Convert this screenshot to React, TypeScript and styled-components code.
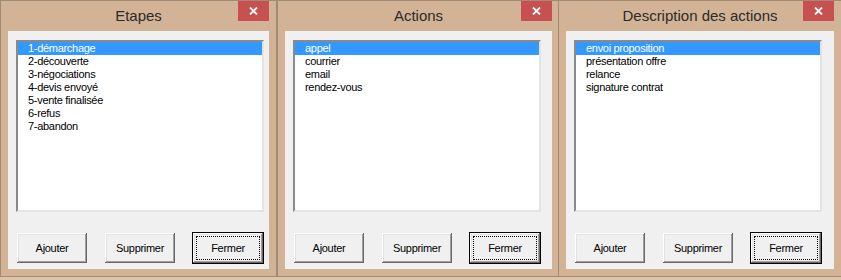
import React from 'react';
import styled, { createGlobalStyle } from 'styled-components';

const GlobalStyle = createGlobalStyle`
  html, body {
    margin: 0;
    padding: 0;
    background: #dcc6aa;
  }
  body {
    font-family: "Liberation Sans", Arial, sans-serif;
  }
`;

const Desktop = styled.div`
  display: flex;
  align-items: flex-start;
  width: 841px;
  height: 280px;
  overflow: hidden;
`;

const Window = styled.div<{ $clientWidth: number; $overlap?: number }>`
  box-sizing: border-box;
  display: flex;
  flex-direction: column;
  flex: none;
  width: ${(p) => p.$clientWidth + 16}px;
  height: 277px;
  margin-left: ${(p) => -(p.$overlap || 0)}px;
  padding: 0 7px 7px;
  background: #d3b395;
  border: 1px solid #a08b74;
`;

const TitleBar = styled.div`
  display: grid;
  grid-template-columns: 1fr auto 1fr;
  height: 30px;
  margin: 0 -7px;
  padding: 0 7px;
`;

const Title = styled.div`
  grid-column: 2;
  align-self: center;
  font-size: 15px;
  color: #2b2b2b;
  margin-top: -1px;
`;

const CloseButton = styled.div`
  grid-column: 3;
  justify-self: end;
  align-self: start;
  width: 31px;
  height: 20px;
  background: #c75050;
  display: flex;
  align-items: center;
  justify-content: center;
`;

const Client = styled.div`
  flex: 1;
  background: #f0f0f0;
  padding: 9px 0 0 8px;
  display: flex;
  flex-direction: column;
  gap: 20px;
`;

const ListBox = styled.div`
  box-sizing: border-box;
  width: 248px;
  height: 172px;
  background: #fff;
  border-top: 2px solid #8a8a8a;
  border-left: 2px solid #8a8a8a;
  border-right: 2px solid #e3e3e3;
  border-bottom: 2px solid #e3e3e3;
`;

const Item = styled.div<{ $selected?: boolean }>`
  height: 13px;
  line-height: 13px;
  font-size: 11px;
  letter-spacing: -0.3px;
  padding-left: 10px;
  color: ${(p) => (p.$selected ? '#fff' : '#000')};
  background: ${(p) => (p.$selected ? '#3399ff' : 'transparent')};
  white-space: nowrap;
`;

const ButtonRow = styled.div`
  display: flex;
  gap: 16px;
`;

const Button = styled.div<{ $default?: boolean }>`
  box-sizing: border-box;
  position: relative;
  width: 72px;
  height: 32px;
  display: flex;
  align-items: center;
  justify-content: center;
  font-size: 11px;
  letter-spacing: -0.3px;
  color: #000;
  background: #f0f0f0;
  border: 1px solid ${(p) => (p.$default ? '#000' : '#f0f0f0')};
  box-shadow: inset -1px -1px 0 #696969, inset 1px 1px 0 #fff, inset -2px -2px 0 #a0a0a0, inset 2px 2px 0 #e3e3e3;

  ${(p) =>
    p.$default &&
    `
    &::after {
      content: '';
      position: absolute;
      inset: 3px;
      border: 1px dotted #000;
    }
  `}
`;

const CloseIcon = () => (
  <svg width="9" height="8" viewBox="0 0 9 8">
    <path d="M1 0.5 L8 7.5 M8 0.5 L1 7.5" stroke="#fff" strokeWidth="1.8" />
  </svg>
);

type Pane = {
  title: string;
  items: string[];
  clientWidth: number;
  overlap?: number;
};

const panes: Pane[] = [
  {
    title: 'Etapes',
    items: ['1-démarchage', '2-découverte', '3-négociations', '4-devis envoyé', '5-vente finalisée', '6-refus', '7-abandon'],
    clientWidth: 261
  },
  {
    title: 'Actions',
    items: ['appel', 'courrier', 'email', 'rendez-vous'],
    clientWidth: 267
  },
  {
    title: 'Description des actions',
    items: ['envoi proposition', 'présentation offre', 'relance', 'signature contrat'],
    clientWidth: 268,
    overlap: 2
  }
];

const App: React.FC = () => {
  return (
    <>
      <GlobalStyle />
      <Desktop>
        {panes.map((pane) => (
          <Window key={pane.title} $clientWidth={pane.clientWidth} $overlap={pane.overlap}>
            <TitleBar>
              <Title>{pane.title}</Title>
              <CloseButton>
                <CloseIcon />
              </CloseButton>
            </TitleBar>
            <Client>
              <ListBox>
                {pane.items.map((item, i) => (
                  <Item key={item} $selected={i === 0}>
                    {item}
                  </Item>
                ))}
              </ListBox>
              <ButtonRow>
                <Button>Ajouter</Button>
                <Button>Supprimer</Button>
                <Button $default>Fermer</Button>
              </ButtonRow>
            </Client>
          </Window>
        ))}
      </Desktop>
    </>
  );
};

export default App;
